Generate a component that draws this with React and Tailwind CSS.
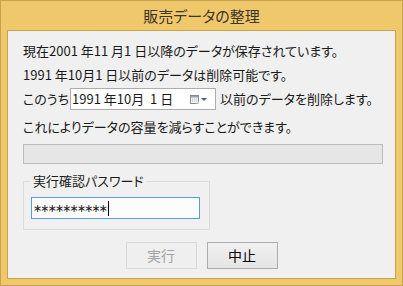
import React from "react";

const font = { fontFamily: '"Noto Sans CJK JP", "Noto Sans", sans-serif' };

function CalendarIcon() {
  return (
    <svg width="18" height="9" viewBox="0 0 18 9" className="block">
      <rect x="0.5" y="0.5" width="8" height="8" fill="#f4f4f4" stroke="#8a8a8a" />
      <rect x="1" y="1" width="7" height="1.5" fill="#9aa0a8" />
      <g fill="#b0b0b0">
        <rect x="2" y="3.5" width="1" height="1" />
        <rect x="4" y="3.5" width="1" height="1" />
        <rect x="6" y="3.5" width="1" height="1" />
        <rect x="2" y="5.5" width="1" height="1" />
        <rect x="4" y="5.5" width="1" height="1" />
        <rect x="6" y="5.5" width="1" height="1" />
      </g>
      <path d="M6 9 L9 6 L9 9 Z" fill="#c8c8c8" />
      <path d="M11 3 L17 3 L14 6 Z" fill="#4d5f80" />
    </svg>
  );
}

export default function App() {
  return (
    <div
      className="w-[403px] h-[286px] bg-[#f0c86c] border border-[#c9a24c] flex flex-col [font-feature-settings:'palt']"
      style={font}
    >
      <div className="h-[29px] flex items-center justify-center text-[15px] text-[#3d3628] pt-[1px]">
        販売データの整理
      </div>
      <div className="mx-[6px] mb-[6px] border border-[#c9a24c] bg-[#f0f0f0] flex-1 flex flex-col pl-[15px] text-[13px] text-[#1a1a1a]">
        <div className="h-[24px] mt-[8px] flex items-center whitespace-pre">
          現在2001 年11 月1 日以降のデータが保存されています。
        </div>
        <div className="h-[24px] flex items-center whitespace-pre">
          1991 年10月1 日以前のデータは削除可能です。
        </div>
        <div className="h-[22px] mt-[1px] flex items-center whitespace-pre">
          <span>このうち</span>
          <div className="ml-[1px] w-[146px] h-[22px] border border-[#abadb3] bg-white flex items-center pl-[1px] pr-[7px]">
            <span className="whitespace-pre">1991 年10月  1 日</span>
            <div className="ml-auto">
              <CalendarIcon />
            </div>
          </div>
          <span className="ml-[4px]">以前のデータを削除します。</span>
        </div>
        <div className="h-[24px] mt-[5px] flex items-center whitespace-pre">
          これによりデータの容量を減らすことができます。
        </div>
        <div className="mt-[5px] w-[360px] h-[20px] border border-[#bcbcbc] bg-[#e6e6e6]" />
        <div className="relative mt-[17px] w-[187px] h-[49px] border border-[#dcdcdc] pt-[15px] pl-[7px]">
          <span className="absolute left-[6px] -top-[10px] px-[3px] bg-[#f0f0f0] text-[13px] leading-[18px]">
            実行確認パスワード
          </span>
          <div className="w-[169px] h-[22px] border border-[#569de5] bg-[#fcfcfc] flex items-center pl-[1px]">
            <span
              className="text-[11px] leading-none tracking-[-1.9px] [font-feature-settings:normal]"
              style={{ fontFamily: '"DejaVu Sans", sans-serif' }}
            >
              ∗∗∗∗∗∗∗∗∗∗
            </span>
            <span className="w-px h-[15px] bg-black ml-[2px]" />
          </div>
        </div>
        <div className="mt-[12px] -ml-[15px] flex justify-center gap-[10px]">
          <div className="w-[71px] h-[27px] border border-[#d9d9d9] bg-[#efefef] flex items-center justify-center text-[14px] text-[#a3a3a3]">
            実行
          </div>
          <div className="w-[71px] h-[27px] border border-[#acacac] bg-gradient-to-b from-[#f0f0f0] to-[#e5e5e5] flex items-center justify-center text-[14px] text-black">
            中止
          </div>
        </div>
      </div>
    </div>
  );
}
